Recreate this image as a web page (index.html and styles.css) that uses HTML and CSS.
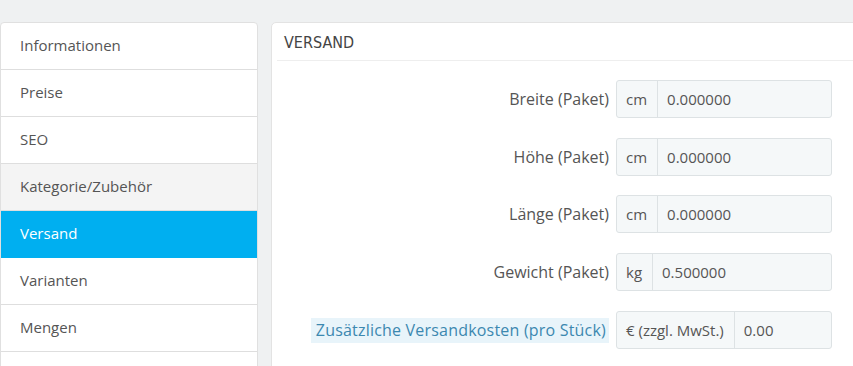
FILE: index.html
```html
<!DOCTYPE html>
<html lang="de">
<head>
    <meta charset="UTF-8">
    <meta name="viewport" content="width=device-width, initial-scale=1.0">
    <title>Produkt bearbeiten - Versand</title>
    <link rel="stylesheet" href="styles.css">
</head>
<body>

    <div class="layout">
        <div class="tab-list">
            <div class="tab-item">Informationen</div>
            <div class="tab-item">Preise</div>
            <div class="tab-item">SEO</div>
            <div class="tab-item tab-muted">Kategorie/Zubehör</div>
            <div class="tab-item tab-active">Versand</div>
            <div class="tab-item">Varianten</div>
            <div class="tab-item">Mengen</div>
            <div class="tab-item"></div>
        </div>

        <div class="panel">
            <div class="panel-heading">VERSAND</div>
            <div class="panel-body">
                <div class="form-row">
                    <label class="form-label">Breite (Paket)</label>
                    <div class="input-group">
                        <span class="input-addon">cm</span>
                        <span class="input-value">0.000000</span>
                    </div>
                </div>
                <div class="form-row">
                    <label class="form-label">Höhe (Paket)</label>
                    <div class="input-group">
                        <span class="input-addon">cm</span>
                        <span class="input-value">0.000000</span>
                    </div>
                </div>
                <div class="form-row">
                    <label class="form-label">Länge (Paket)</label>
                    <div class="input-group">
                        <span class="input-addon">cm</span>
                        <span class="input-value">0.000000</span>
                    </div>
                </div>
                <div class="form-row">
                    <label class="form-label">Gewicht (Paket)</label>
                    <div class="input-group">
                        <span class="input-addon">kg</span>
                        <span class="input-value">0.500000</span>
                    </div>
                </div>
                <div class="form-row">
                    <label class="form-label"><span class="label-hint">Zusätzliche Versandkosten (pro Stück)</span></label>
                    <div class="input-group">
                        <span class="input-addon">€ (zzgl. MwSt.)</span>
                        <span class="input-value">0.00</span>
                    </div>
                </div>
            </div>
        </div>
    </div>

</body>
</html>
```

FILE: styles.css
```css
html, body {
    height: 100%;
}

body {
    font-family: "Open Sans", Arial, sans-serif;
    font-size: 15px;
    color: #555;
    background-color: #eff1f2;
    margin: 0;
    padding-top: 22px;
    overflow: hidden;
}

.layout {
    display: flex;
    align-items: flex-start;
    gap: 13px;
}

/* Tabs on the left */
.tab-list {
    flex: 0 0 258px;
    box-sizing: border-box;
    background-color: #fff;
    border: 1px solid #e0e0e0;
    border-radius: 4px 4px 0 0;
    overflow: hidden;
}

.tab-item {
    height: 46px;
    line-height: 45px;
    padding-left: 19px;
    border-bottom: 1px solid #dedede;
}

.tab-muted {
    background-color: #f4f4f4;
}

.tab-active {
    background-color: #00aff0;
    color: #fff;
    border-bottom-color: #00aff0;
}

/* Panel */
.panel {
    flex: 0 0 640px;
    background-color: #fff;
    border: 1px solid #e3e3e3;
    border-radius: 5px;
    padding: 0 5px 40px;
}

.panel-heading {
    height: 37px;
    line-height: 39px;
    padding-left: 7px;
    border-bottom: 1px solid #eee;
    font-family: "Liberation Sans Narrow", "DejaVu Sans Condensed", "Open Sans", sans-serif;
    font-stretch: condensed;
    font-size: 16px;
    color: #444;
}

.panel-body {
    display: flex;
    flex-direction: column;
    gap: 19.7px;
    padding-top: 19px;
}

.form-row {
    display: flex;
    align-items: center;
    gap: 7px;
}

.form-label {
    width: 332px;
    text-align: right;
    font-size: 16px;
}

.label-hint {
    background-color: #e8f4fa;
    color: #3c88b0;
    padding: 1px 3px 2px 5px;
    letter-spacing: 0.2px;
}

.input-group {
    display: flex;
    width: 216px;
    height: 38px;
    box-sizing: border-box;
    background-color: #f5f8f9;
    border: 1px solid #dde2e4;
    border-radius: 3px;
    line-height: 36px;
}

.input-addon {
    padding: 0 10px 0 9px;
    border-right: 1px solid #dde2e4;
}

.input-value {
    padding-left: 9px;
}
```
